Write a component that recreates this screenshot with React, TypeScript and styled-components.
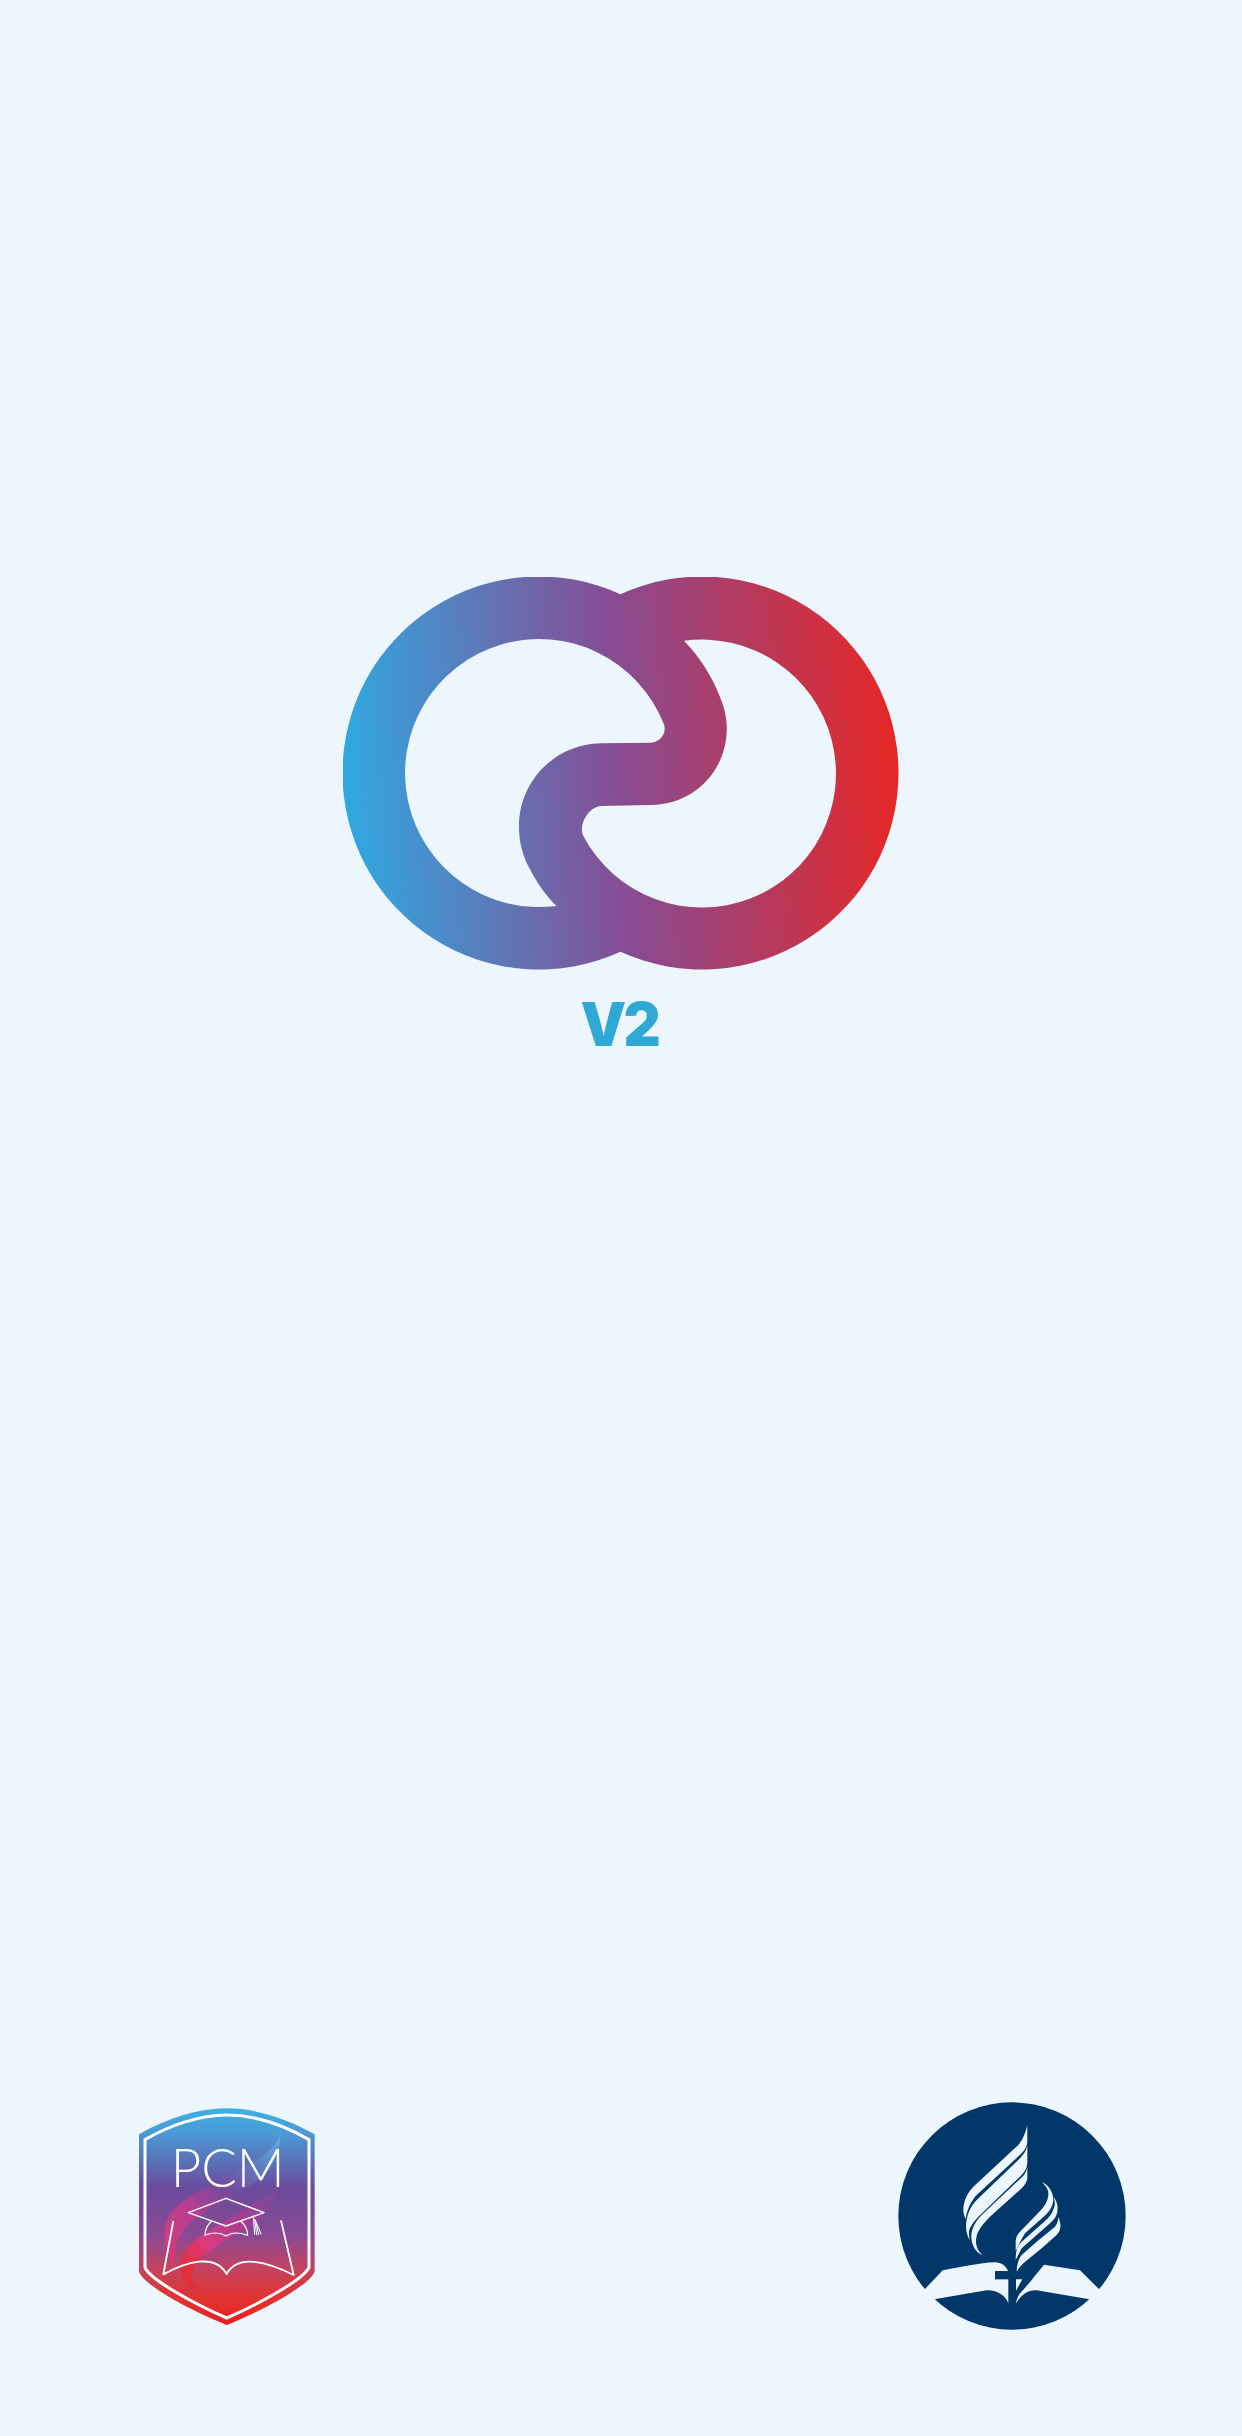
import React from "react";
import styled, { createGlobalStyle } from "styled-components";

const Global = createGlobalStyle`
  html, body { margin: 0; padding: 0; background: #edf6fc; }
`;

const Page = styled.main`
  width: 1242px;
  height: 2436px;
  background: #edf6fc;
  display: flex;
  flex-direction: column;
  align-items: center;
  overflow: hidden;
`;

const Hero = styled.section`
  display: flex;
  flex-direction: column;
  align-items: center;
  padding-top: 577px;
`;

const MainMark = styled.svg`
  display: block;
  width: 556px;
  height: 393px;
`;

const Version = styled.div`
  margin-top: 24px;
  font-family: Inter, "Liberation Sans", sans-serif;
  font-weight: 900;
  font-size: 60px;
  line-height: 60px;
  letter-spacing: -3px;
  color: #2fa8d5;
  transform: translateX(-2px) scaleX(0.96);
`;

const Footer = styled.footer`
  margin-top: auto;
  width: 100%;
  box-sizing: border-box;
  display: flex;
  justify-content: space-between;
  padding: 0 102px 76px 120px;
`;

const Emblem = styled.svg`
  display: block;
  height: 270px;
  width: ${(p: { $w: number }) => p.$w}px;
`;

const MainLogo = () => (
  <MainMark viewBox="343 577 556 393" aria-label="Logo">
    <defs>
      <linearGradient id="mainGrad" gradientUnits="userSpaceOnUse" x1="343" y1="790" x2="898" y2="756">
        <stop offset="0" stopColor="#2fa9e1" />
        <stop offset="0.5" stopColor="#874c93" />
        <stop offset="1" stopColor="#e62725" />
      </linearGradient>
    </defs>
    <path
      fill="url(#mainGrad)"
      fillRule="evenodd"
      d="M620.5 594.2 A196.5 196.5 0 1 0 620.5 951.8 A196.5 196.5 0 1 0 620.5 594.2 Z
         M556.5 905.9 A134 134 0 1 1 664 724.6
         C667 733 660 742.6 650 742.7 L601.3 743.3
         C556 743.8 519 780 519 826.7 C519 840 521.5 853 528.6 866.7 C536 881 545 895 556.5 905.9 Z
         M684 640.8 A134 134 0 1 1 583.5 836.2
         C578 826 588 806.5 601.3 806 L651 805
         C695 804.5 726.8 770 726.8 728.3 C726.8 717 724 707 720 697 C712 676 699 656 684 640.8 Z"
    />
  </MainMark>
);

const PcmLogo = () => (
  <Emblem $w={210} viewBox="0 0 630 810" aria-label="PCM">
    <defs>
      <linearGradient id="shield" x1="0" y1="0" x2="0" y2="1">
        <stop offset="0" stopColor="#3fb0e6" />
        <stop offset="0.12" stopColor="#4b98d3" />
        <stop offset="0.37" stopColor="#6b4a9c" />
        <stop offset="0.59" stopColor="#8b4a94" />
        <stop offset="0.74" stopColor="#c4435f" />
        <stop offset="0.88" stopColor="#e2322f" />
        <stop offset="1" stopColor="#e61f22" />
      </linearGradient>
      <linearGradient id="swoosh1" gradientUnits="userSpaceOnUse" x1="480" y1="120" x2="140" y2="560">
        <stop offset="0" stopColor="#5fb0e2" />
        <stop offset="0.22" stopColor="#5d86c6" stopOpacity="0.8" />
        <stop offset="0.42" stopColor="#7a4a9c" stopOpacity="0.6" />
        <stop offset="0.62" stopColor="#b53d92" />
        <stop offset="0.85" stopColor="#cf3d80" />
        <stop offset="1" stopColor="#d83a50" />
      </linearGradient>
      <linearGradient id="swoosh2" gradientUnits="userSpaceOnUse" x1="480" y1="260" x2="200" y2="610">
        <stop offset="0" stopColor="#7a4a9c" stopOpacity="0.3" />
        <stop offset="0.4" stopColor="#a83d92" />
        <stop offset="0.65" stopColor="#da3a80" />
        <stop offset="0.85" stopColor="#e13040" />
        <stop offset="1" stopColor="#e42c2a" />
      </linearGradient>
    </defs>
    <path
      fill="url(#shield)"
      d="M57 133 C140 85 235 55 320 55 C405 55 500 85 584 133 L584 545 C565 590 420 665 320 705 C220 665 75 590 57 545 Z"
    />
    <path
      fill="url(#swoosh1)"
      d="M482 122 C470 180 420 205 340 250 C250 295 140 340 133 420 C132 470 150 520 172 555 C160 500 160 460 190 420 C230 370 320 330 400 280 C460 240 482 190 482 122 Z"
    />
    <path
      fill="url(#swoosh2)"
      d="M478 260 C460 320 400 340 320 390 C260 425 180 470 183 530 C185 570 210 600 240 605 C215 595 210 560 225 530 C250 480 330 450 400 400 C450 365 475 320 478 260 Z"
    />
    <path
      fill="none"
      stroke="#fff"
      strokeWidth="9"
      d="M75 149 C150 105 240 75 320 75 C400 75 490 105 567 149 L567 532 C550 570 410 645 320 684 C230 645 90 570 75 532 Z"
    />
    <text
      x="152"
      y="292"
      fontFamily="Lato, Inter, 'Liberation Sans', sans-serif"
      fontWeight="300"
      fontSize="160"
      fill="#fff"
      textLength="342"
      lengthAdjust="spacingAndGlyphs"
    >
      PCM
    </text>
    <g fill="none" stroke="#fff" strokeLinejoin="round" strokeLinecap="round">
      <path strokeWidth="4.5" d="M318 325 L432 368 L318 408 L205 368 Z" />
      <path
        strokeWidth="3.5"
        d="M275 393 C262 405 255 420 255 436 C275 428 300 426 318 438 C336 426 362 428 383 436 C383 420 375 405 362 393"
      />
      <path strokeWidth="3" d="M400 378 L404 433 M404 388 L410 434 M406 390 L416 434 M408 396 L423 432" />
      <path
        strokeWidth="5.5"
        strokeLinecap="butt"
        d="M160 393 L130 553 C200 515 285 490 320 552 C355 490 440 515 521 555 L483 391"
      />
    </g>
  </Emblem>
);

const SdaLogo = () => (
  <Emblem $w={260} viewBox="0 0 780 810" aria-label="Seventh-day Adventist">
    <circle cx="396" cy="378" r="341" fill="#013769" />
    <g fill="#edf6fc">
      <path d="M120 613 L135 597 L188 541 C240 532 300 518 345 517 C365 517 378 528 385 545 L385 640 C376 612 345 600 320 601 L163 628 Z" />
      <path d="M672 613 L657 597 L600 541 L492 524 C470 550 440 590 420 610 C413 622 408 632 408 640 C425 612 445 600 470 601 L628 628 Z" />
      <path d="M442 105 C438 125 428 150 415 165 L280 290 C262 308 250 335 250 360 C250 370 253 380 257 387 C260 362 272 335 290 315 L425 190 C436 178 442 165 442 155 Z" />
      <path d="M442 165 C440 180 432 192 420 205 L290 330 C270 350 258 380 258 410 C258 425 263 440 270 451 C266 435 266 420 270 415 C274 405 284 391 295 380 L425 255 C435 245 441 233 442 220 Z" />
      <path d="M442 230 C440 245 433 255 422 265 L305 375 C288 392 274 415 274 440 C274 465 288 488 308 495 C292 482 284 462 290 438 C295 418 310 400 330 380 L425 295 C435 285 441 275 442 265 Z" />
      <path d="M485 275 C498 288 507 300 505 315 C503 332 497 345 483 360 L420 425 C411 435 407 445 407 455 L407 484 C412 470 422 452 435 430 L480 390 C500 372 518 358 520 330 C520 305 505 285 485 275 Z" />
      <path d="M520 320 C526 335 526 345 520 358 C516 372 505 385 495 393 L420 460 C411 470 407 485 407 510 C412 500 418 490 425 475 L515 395 C530 382 535 365 532 345 C530 335 526 327 520 320 Z" />
      <path d="M535 380 C535 392 532 400 525 410 L470 455 L425 495 C415 507 410 525 410 547 C415 535 423 528 430 520 L485 475 L530 435 C540 425 544 412 540 397 C539 391 537 385 535 380 Z" />
    </g>
    <path fill="#013769" d="M345 543 H432 V568 H345 Z" />
    <path fill="#edf6fc" d="M408 568 H427 L408 602 Z" />
    <text
      x="648"
      y="524"
      textAnchor="middle"
      fontFamily="'Liberation Sans', sans-serif"
      fontSize="46"
      fill="#013769"
    >
      ®
    </text>
  </Emblem>
);

export default function App() {
  return (
    <Page>
      <Global />
      <Hero>
        <MainLogo />
        <Version>V2</Version>
      </Hero>
      <Footer>
        <PcmLogo />
        <SdaLogo />
      </Footer>
    </Page>
  );
}
